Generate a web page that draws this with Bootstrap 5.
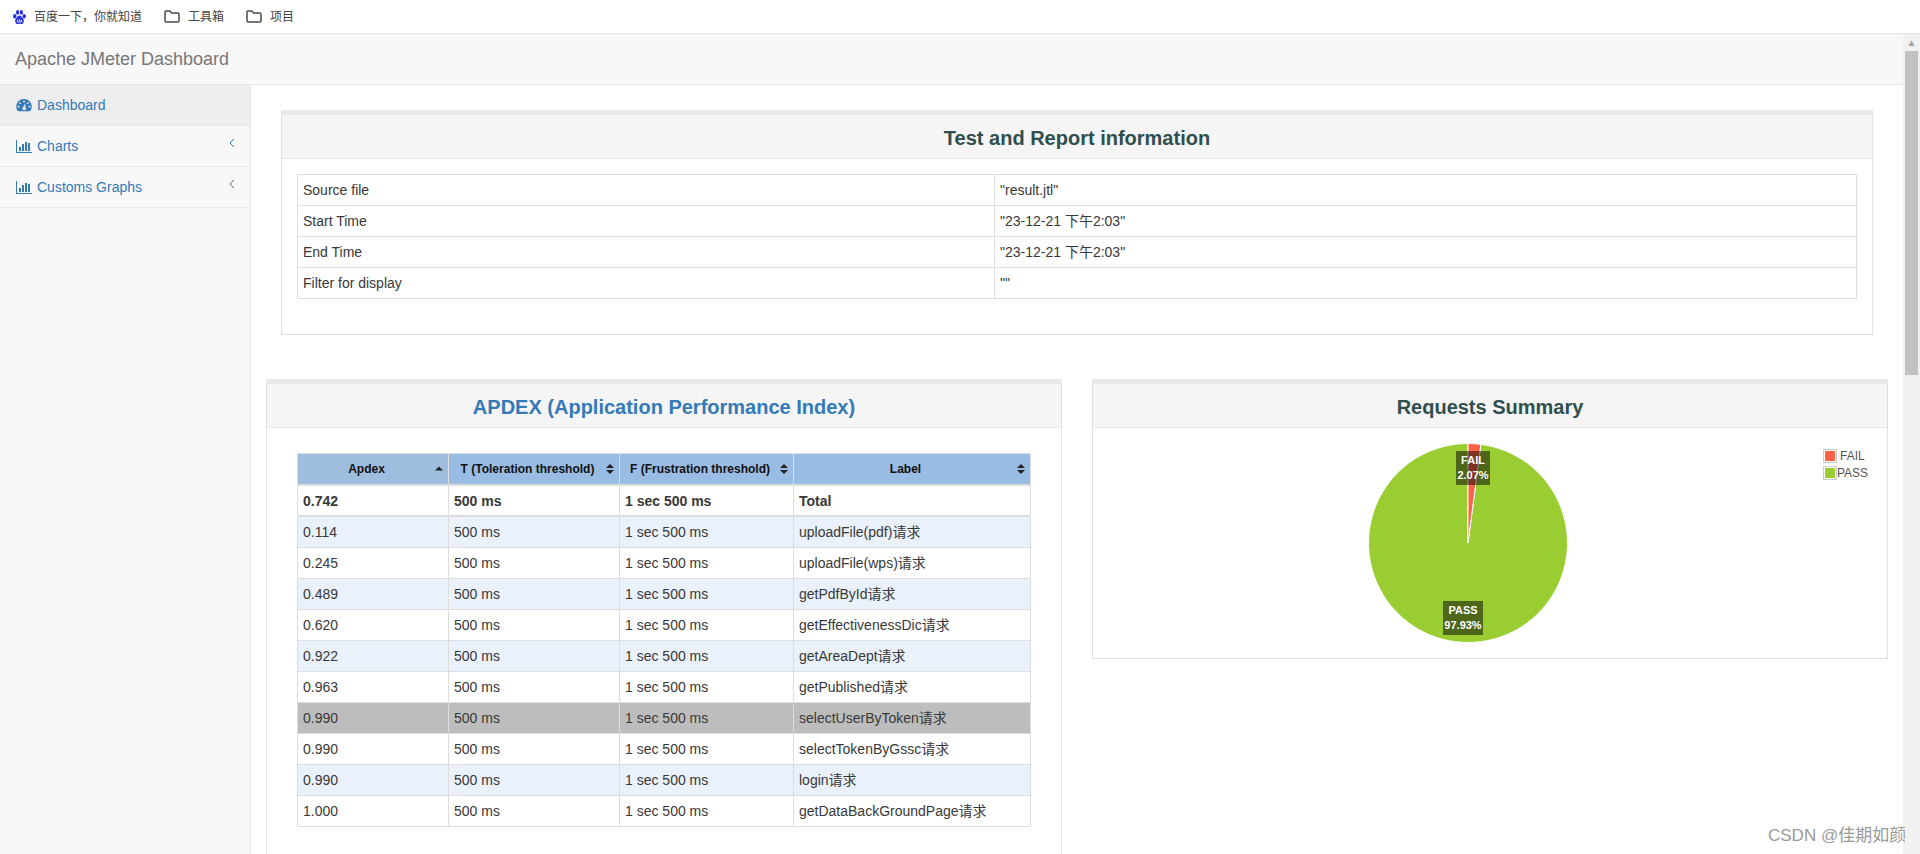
<!DOCTYPE html>
<html lang="zh">
<head>
<meta charset="utf-8">
<title>Apache JMeter Dashboard</title>
<link rel="stylesheet" href="https://cdn.jsdelivr.net/npm/bootstrap@5.3.0/dist/css/bootstrap.min.css">
<style>
html,body{height:854px;overflow:hidden}
body{font-family:"Liberation Sans","Noto Sans CJK SC",sans-serif;font-size:14px;line-height:20px;color:#333;background:#fff;position:relative}
.bookbar{height:34px;border-bottom:1px solid #e3e3e3;padding-left:13px;font-size:12px;color:#444}
.bookbar svg{display:block;flex:none}
.bm-first{margin-right:22px}
.bm-folder{margin-right:22px}
.topnav{height:51px;background:#f8f8f8;border-bottom:1px solid #e7e7e7;padding:0 0 0 15px;margin-right:17px;flex:none}
.topnav .navbar-brand{font-size:18px;line-height:20px;color:#777;padding:0;margin:0}
.shell{height:769px}
.pagecol{flex:1 1 auto;min-width:0}
.fakebar{width:17px;flex:none;background:#f1f1f1;margin-top:-51px;height:820px;padding:0 2px}
.fakebar-arrow{height:17px;color:#a3a3a3;font-size:10px;line-height:18px;text-align:center}
.fakebar-thumb{height:324px;background:#c1c1c1}
.pageinner{height:769px;overflow:hidden}
.sidemenu{width:251px;flex:none;background:#f8f8f8;border-right:1px solid #e7e7e7}
.sidemenu .nav-link{height:41px;padding:0 0 0 16px;color:#337ab7;border-bottom:1px solid #e7e7e7;font-size:14px;line-height:20px}
.sidemenu .nav-link.active-item{background:#eee}
.sidemenu svg.ico{margin-right:5px;flex:none}
.sidemenu svg.chev{margin-left:auto;margin-right:15px;margin-top:-6px}
.contentarea{flex:1 1 auto;min-width:0;padding:25px 15px 0 15px;overflow:hidden}
.infowrap{margin:0 15px 44px}
.panelbox{border:1px solid #e0e0e0;border-top:5px solid #e7eaec;border-radius:0;background:#fff}
.panelhead{height:44px;background:#f5f5f5;border-bottom:1px solid #e7e7e7;border-radius:0!important;padding:0;font-size:20px;font-weight:700;line-height:46px;text-align:center;color:#2f4f4f}
.panelhead.apdex-title{color:#337ab7}
.infobody{padding:15px 15px 35px 15px}
.apdexbody{padding:25px 30px 40px 30px}
.chartbody{padding:1px 0 0}
.chartbody svg{display:block}
.apdexrow{--bs-gutter-x:30px}
.datatable{table-layout:fixed;width:100%;margin:0;border-color:#ddd;color:#333;--bs-table-border-color:#ddd}
.datatable td,.datatable th{padding:5px;line-height:20px;height:31px;vertical-align:middle;font-size:14px;color:#383838;border-color:#ddd;background:transparent;box-shadow:none}
.col-a{width:151px}.col-t{width:171px}.col-f{width:174px}
.info-first{width:697px}
.datatable th{font-size:12px;font-weight:700;text-align:center;background:#99bce5;color:#111;position:relative;padding-right:18px;border-bottom:2px solid #ddd}
.datatable th.sorted{background:#9fbedf}
.datatable th svg{position:absolute;right:5px;top:10px}
.datatable .totalrow td{font-weight:700;border-bottom:2px solid #ddd;height:30px;padding-top:5px;padding-bottom:4px}
.datatable .oddrow td{background:#eaf1fa}
.datatable .hlrow td{background:#bdbdbd}
.wmark{position:absolute;left:1768px;top:824px;width:137px;height:24px;overflow:hidden;white-space:nowrap;font-size:17px;line-height:24px;color:#9a9a9a}
</style>
</head>
<body>
<div class="bookbar d-flex align-items-center">
  <svg class="me-2" width="13" height="14" viewBox="0 0 13 14" aria-hidden="true"><g fill="#2932e1"><ellipse cx="1.800" cy="6.200" rx="1.700" ry="2.200"/><ellipse cx="4.600" cy="2.400" rx="1.600" ry="2.300"/><ellipse cx="8.400" cy="2.400" rx="1.600" ry="2.300"/><ellipse cx="11.200" cy="6.200" rx="1.700" ry="2.200"/><path d="M6.500 5.600c-1.800 0-2.200 1.700-3.500 2.800C1.600 9.700 2 14 4.600 14c.9 0 1.100-.3 1.900-.3s1 .3 1.900.3c2.600 0 3-4.300 1.600-5.600C8.700 7.300 8.300 5.600 6.500 5.600z"/></g><path d="M4.500 9.500v2.300c0 .7 2 .7 2 0V9.500M7 10v1.800c0 .6 1.600.6 1.600 0V10" fill="none" stroke="#fff" stroke-width=".8"/></svg>
  <span class="bm-first">百度一下，你就知道</span>
  <svg class="me-2" width="16" height="13" viewBox="0 0 16 13" aria-hidden="true"><path d="M1 2.200c0-.6.500-1.200 1.200-1.200h3.600l1.700 1.900h6.300c.7 0 1.200.5 1.200 1.200v6.700c0 .7-.5 1.200-1.200 1.200H2.200C1.500 12 1 11.500 1 10.800z" fill="none" stroke="#4a4a4a" stroke-width="1.500"/></svg>
  <span class="bm-folder">工具箱</span>
  <svg class="me-2" width="16" height="13" viewBox="0 0 16 13" aria-hidden="true"><path d="M1 2.200c0-.6.500-1.200 1.200-1.200h3.600l1.700 1.900h6.300c.7 0 1.200.5 1.200 1.200v6.700c0 .7-.5 1.200-1.200 1.200H2.200C1.500 12 1 11.500 1 10.800z" fill="none" stroke="#4a4a4a" stroke-width="1.500"/></svg>
  <span>项目</span>
</div>
<nav class="navbar topnav"><span class="navbar-brand">Apache JMeter Dashboard</span></nav>
<div class="shell d-flex">
  <div class="pagecol">
    <div class="pageinner d-flex">
      <aside class="sidemenu">
        <nav class="nav flex-column">
          <a class="nav-link active-item d-flex align-items-center" href="#">
            <svg class="ico" width="16" height="13" viewBox="0 0 14 12" aria-hidden="true"><path fill="#337ab7" fill-rule="evenodd" d="M7 0a7 7 0 0 1 6 10.700c-.2.300-.5.500-.9.500H1.900c-.4 0-.7-.2-.9-.5A7 7 0 0 1 7 0zM7 1.300a.9.900 0 1 0 0 1.800.9.900 0 0 0 0-1.800zM3.400 2.900a.9.900 0 1 0 0 1.800.9.900 0 0 0 0-1.800zM10.600 2.900a.9.900 0 1 0 0 1.800.9.900 0 0 0 0-1.800zM2 6.300a.9.900 0 1 0 0 1.800.9.900 0 0 0 0-1.800zM12 6.300a.9.900 0 1 0 0 1.800.9.900 0 0 0 0-1.800zM8.300 3.500 6.500 7.200a1.500 1.500 0 1 0 1.500 3 1.500 1.500 0 0 0 .2-2.700z"/></svg>
            Dashboard
          </a>
          <a class="nav-link d-flex align-items-center" href="#">
            <svg class="ico" width="16" height="13" viewBox="0 0 16 13" aria-hidden="true"><path fill="#337ab7" d="M0 0h1v12h16v1H0zM3 7h2v4H3zM6 4h2v7H6zM9 2h2v9H9zM12 3h2v8h-2z"/></svg>
            Charts
            <svg class="chev" width="6" height="10" viewBox="0 0 6 10" aria-hidden="true"><path d="M5 1 1 5l4 4" fill="none" stroke="#337ab7" stroke-width="1"/></svg>
          </a>
          <a class="nav-link d-flex align-items-center" href="#">
            <svg class="ico" width="16" height="13" viewBox="0 0 16 13" aria-hidden="true"><path fill="#337ab7" d="M0 0h1v12h16v1H0zM3 7h2v4H3zM6 4h2v7H6zM9 2h2v9H9zM12 3h2v8h-2z"/></svg>
            Customs Graphs
            <svg class="chev" width="6" height="10" viewBox="0 0 6 10" aria-hidden="true"><path d="M5 1 1 5l4 4" fill="none" stroke="#337ab7" stroke-width="1"/></svg>
          </a>
        </nav>
      </aside>
      <main class="contentarea">
        <div class="infowrap">
          <section class="card panelbox">
            <div class="card-header panelhead">Test and Report information</div>
            <div class="card-body infobody">
              <table class="table table-bordered datatable">
                <colgroup><col class="info-first"><col></colgroup>
                <tbody>
                  <tr><td>Source file</td><td>"result.jtl"</td></tr>
                  <tr><td>Start Time</td><td>"23-12-21 下午2:03"</td></tr>
                  <tr><td>End Time</td><td>"23-12-21 下午2:03"</td></tr>
                  <tr><td>Filter for display</td><td>""</td></tr>
                </tbody>
              </table>
            </div>
          </section>
        </div>
        <div class="row flex-nowrap apdexrow">
          <div class="col-6">
            <section class="card panelbox">
              <div class="card-header panelhead apdex-title">APDEX (Application Performance Index)</div>
              <div class="card-body apdexbody">
                <table class="table table-bordered datatable">
                  <colgroup><col class="col-a"><col class="col-t"><col class="col-f"><col></colgroup>
                  <thead>
                    <tr>
                      <th class="sorted">Apdex<svg width="8" height="10" viewBox="0 0 8 10" aria-hidden="true"><path d="M0 6.500 4 2.500 8 6.500z" fill="#222"/></svg></th>
                      <th>T (Toleration threshold)<svg width="8" height="10" viewBox="0 0 8 10" aria-hidden="true"><path d="M0 4 4 0 8 4zM0 6 4 10 8 6z" fill="#222"/></svg></th>
                      <th>F (Frustration threshold)<svg width="8" height="10" viewBox="0 0 8 10" aria-hidden="true"><path d="M0 4 4 0 8 4zM0 6 4 10 8 6z" fill="#222"/></svg></th>
                      <th>Label<svg width="8" height="10" viewBox="0 0 8 10" aria-hidden="true"><path d="M0 4 4 0 8 4zM0 6 4 10 8 6z" fill="#222"/></svg></th>
                    </tr>
                  </thead>
                  <tbody>
                    <tr class="totalrow"><td>0.742</td><td>500 ms</td><td>1 sec 500 ms</td><td>Total</td></tr>
                    <tr class="oddrow"><td>0.114</td><td>500 ms</td><td>1 sec 500 ms</td><td>uploadFile(pdf)请求</td></tr>
                    <tr><td>0.245</td><td>500 ms</td><td>1 sec 500 ms</td><td>uploadFile(wps)请求</td></tr>
                    <tr class="oddrow"><td>0.489</td><td>500 ms</td><td>1 sec 500 ms</td><td>getPdfById请求</td></tr>
                    <tr><td>0.620</td><td>500 ms</td><td>1 sec 500 ms</td><td>getEffectivenessDic请求</td></tr>
                    <tr class="oddrow"><td>0.922</td><td>500 ms</td><td>1 sec 500 ms</td><td>getAreaDept请求</td></tr>
                    <tr><td>0.963</td><td>500 ms</td><td>1 sec 500 ms</td><td>getPublished请求</td></tr>
                    <tr class="hlrow"><td>0.990</td><td>500 ms</td><td>1 sec 500 ms</td><td>selectUserByToken请求</td></tr>
                    <tr><td>0.990</td><td>500 ms</td><td>1 sec 500 ms</td><td>selectTokenByGssc请求</td></tr>
                    <tr class="oddrow"><td>0.990</td><td>500 ms</td><td>1 sec 500 ms</td><td>login请求</td></tr>
                    <tr><td>1.000</td><td>500 ms</td><td>1 sec 500 ms</td><td>getDataBackGroundPage请求</td></tr>
                  </tbody>
                </table>
              </div>
            </section>
          </div>
          <div class="col-6">
            <section class="card panelbox">
              <div class="card-header panelhead">Requests Summary</div>
              <div class="card-body chartbody">
                <svg width="793" height="229" viewBox="0 0 793 229" font-family="'Liberation Sans',sans-serif" role="img" aria-label="Requests Summary pie chart">
                  <path d="M375 114 L387.900 15.340 A99.500 99.500 0 1 1 375 14.500 Z" fill="#9acd32" stroke="#fff" stroke-width="1"/>
                  <path d="M375 114 L375 14.500 A99.500 99.500 0 0 1 387.900 15.340 Z" fill="#ff6347" stroke="#fff" stroke-width="1"/>
                  <rect x="363" y="22" width="34" height="34" fill="#000" fill-opacity=".5"/>
                  <text x="380" y="35" text-anchor="middle" font-size="11" font-weight="700" fill="#fff">FAIL</text>
                  <text x="380" y="50" text-anchor="middle" font-size="11" font-weight="700" fill="#fff">2.07%</text>
                  <rect x="350" y="172" width="40" height="34" fill="#000" fill-opacity=".5"/>
                  <text x="370" y="185" text-anchor="middle" font-size="11" font-weight="700" fill="#fff">PASS</text>
                  <text x="370" y="200" text-anchor="middle" font-size="11" font-weight="700" fill="#fff">97.93%</text>
                  <rect x="730.500" y="20.500" width="13" height="13" fill="#fff" stroke="#ccc" stroke-width="1"/>
                  <rect x="732" y="22" width="10" height="10" fill="#ff6347"/>
                  <rect x="730.500" y="37.500" width="13" height="13" fill="#fff" stroke="#ccc" stroke-width="1"/>
                  <rect x="732" y="39" width="10" height="10" fill="#9acd32"/>
                  <text x="747" y="31" font-size="12" fill="#545454">FAIL</text>
                  <text x="744" y="47.500" font-size="12" fill="#545454">PASS</text>
                </svg>
              </div>
            </section>
          </div>
        </div>
      </main>
    </div>
  </div>
  <div class="fakebar">
    <div class="fakebar-arrow">&#9650;</div>
    <div class="fakebar-thumb"></div>
  </div>
</div>
<div class="wmark">CSDN @佳期如颜</div>
<script src="https://cdn.jsdelivr.net/npm/bootstrap@5.3.0/dist/js/bootstrap.bundle.min.js"></script>
</body>
</html>
